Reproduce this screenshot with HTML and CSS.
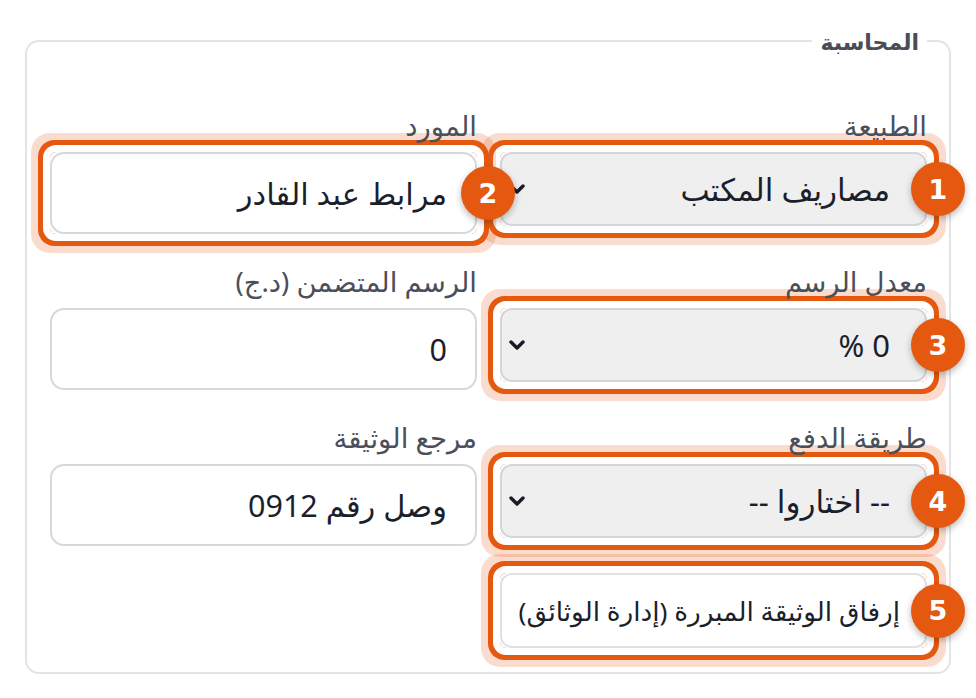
FILE: index.html
```html
<!DOCTYPE html>
<html lang="ar" dir="rtl">
<head>
<meta charset="utf-8">
<title>المحاسبة</title>
<link rel="stylesheet" href="styles.css">
</head>
<body>
<fieldset class="panel">
  <legend class="panel-title">المحاسبة</legend>
  <div class="grid">
    <div class="field">
      <label class="label">الطبيعة</label>
      <div class="hl">
        <div class="select"><span>مصاريف المكتب</span><svg class="chev" viewBox="0 0 16 10" width="16" height="10"><path d="M2 2 L8 8 L14 2"/></svg></div>
        <span class="badge">1</span>
      </div>
    </div>
    <div class="field">
      <label class="label">المورد</label>
      <div class="hl">
        <input class="input" value="مرابط عبد القادر">
        <span class="badge">2</span>
      </div>
    </div>
    <div class="field">
      <label class="label">معدل الرسم</label>
      <div class="hl">
        <div class="select"><span>0 %</span><svg class="chev" viewBox="0 0 16 10" width="16" height="10"><path d="M2 2 L8 8 L14 2"/></svg></div>
        <span class="badge">3</span>
      </div>
    </div>
    <div class="field">
      <label class="label">الرسم المتضمن (د.ج)</label>
      <input class="input" value="0">
    </div>
    <div class="field">
      <label class="label">طريقة الدفع</label>
      <div class="hl">
        <div class="select"><span>-- اختاروا --</span><svg class="chev" viewBox="0 0 16 10" width="16" height="10"><path d="M2 2 L8 8 L14 2"/></svg></div>
        <span class="badge">4</span>
      </div>
    </div>
    <div class="field">
      <label class="label">مرجع الوثيقة</label>
      <input class="input" value="وصل رقم 0912">
    </div>
    <div class="field">
      <div class="hl">
        <button class="btn" type="button">إرفاق الوثيقة المبررة (إدارة الوثائق)</button>
        <span class="badge">5</span>
      </div>
    </div>
  </div>
</fieldset>
</body>
</html>
```
FILE: styles.css
```css
html, body {
  margin: 0;
  padding: 0;
  background: #ffffff;
}
body {
  font-family: "Noto Sans", "DejaVu Sans", sans-serif;
  color: #1f2433;
}
.panel {
  margin: 26px 25px 0 25px;
  padding: 49px 22px 24px 23px;
  border: 2px solid #e4e4e6;
  border-radius: 14px;
  min-width: 0;
}
.panel-title {
  padding: 0 8px;
  font-size: 22px;
  line-height: 30px;
  font-weight: 700;
  color: #4a4d55;
}
.grid {
  display: grid;
  grid-template-columns: minmax(0, 1fr) minmax(0, 1fr);
  column-gap: 23px;
  row-gap: 27px;
  align-items: start;
}
.field {
  display: flex;
  flex-direction: column;
  min-width: 0;
}
.label {
  position: relative;
  z-index: 2;
  font-size: 27.5px;
  line-height: 41px;
  margin-bottom: 6px;
  color: #4b4f59;
}
.hl {
  position: relative;
  border-radius: 6px;
  box-shadow: 0 0 0 7px #ffffff, 0 0 0 12px #e4580f, 0 0 0 19px rgba(232, 96, 30, 0.22);
}
.select {
  display: flex;
  align-items: center;
  justify-content: space-between;
  box-sizing: border-box;
  height: 74px;
  padding: 0 35px 0 7px;
  background: #efeff0;
  border: 2px solid #d3d5da;
  border-radius: 12px;
  font-size: 31px;
  color: #1b1f2c;
}
.chev {
  fill: none;
  stroke: #161b26;
  stroke-width: 3.4;
  stroke-linecap: round;
  stroke-linejoin: round;
}
.input {
  display: block;
  box-sizing: border-box;
  width: 100%;
  height: 82px;
  margin: 0;
  padding: 0 28px;
  background: #ffffff;
  border: 2px solid #d6d8dc;
  border-radius: 14px;
  font-family: inherit;
  font-size: 30.5px;
  color: #1b1f2c;
  outline: none;
}
.btn {
  display: block;
  box-sizing: border-box;
  width: 100%;
  height: 75px;
  margin: 0;
  padding: 0 25px 0 8px;
  text-align: right;
  white-space: nowrap;
  overflow: hidden;
  background: #ffffff;
  border: 2px solid #e0e1e4;
  border-radius: 12px;
  font-family: inherit;
  font-size: 26.3px;
  color: #1b1f2c;
}
.badge {
  position: absolute;
  top: 50%;
  right: -38px;
  transform: translateY(-50%);
  z-index: 3;
  display: flex;
  align-items: center;
  justify-content: center;
  width: 54px;
  height: 54px;
  border-radius: 50%;
  background: #e4580f;
  color: #ffffff;
  font-family: "DejaVu Sans", sans-serif;
  font-weight: 700;
  font-size: 27px;
  box-shadow: 0 3px 7px rgba(0, 0, 0, 0.28);
}
```
